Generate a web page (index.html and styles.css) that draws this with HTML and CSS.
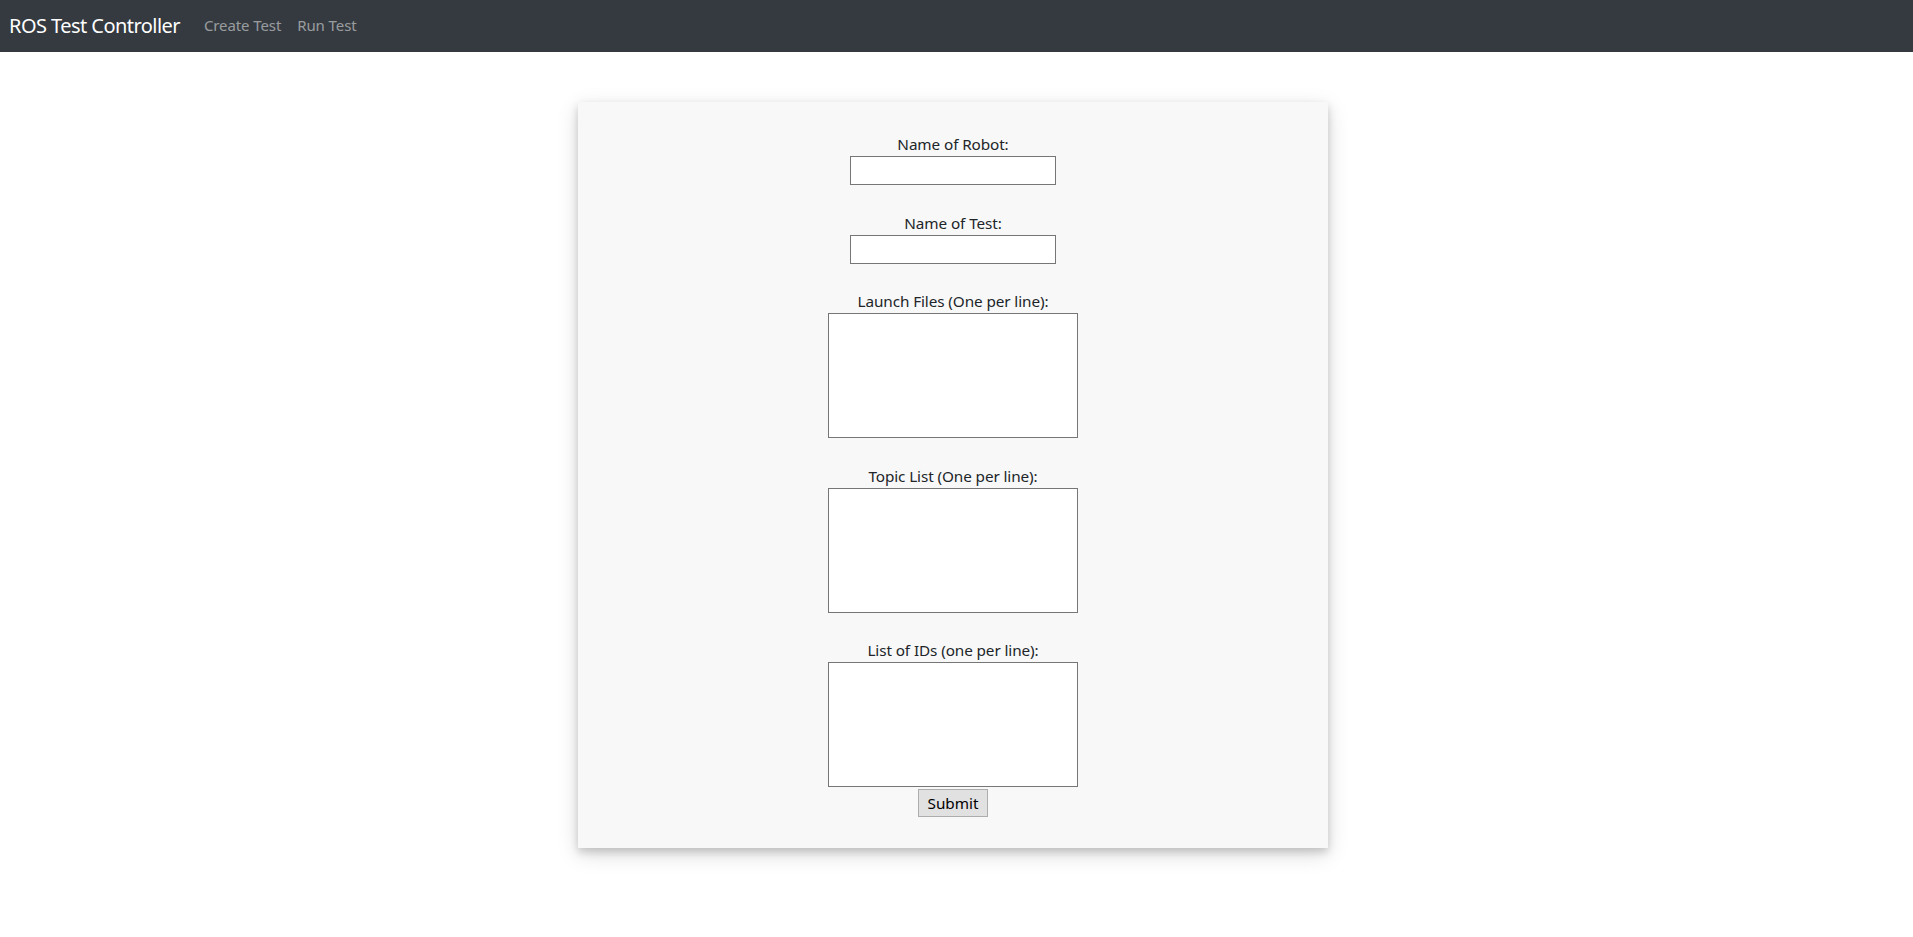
FILE: index.html
```html
<!DOCTYPE html>
<html lang="en">
<head>
<meta charset="utf-8">
<title>ROS Test Controller</title>
<link rel="stylesheet" href="styles.css">
</head>
<body>
<nav class="navbar">
  <a class="brand" href="#">ROS Test Controller</a>
  <a class="nav-link" href="#">Create Test</a>
  <a class="nav-link" href="#">Run Test</a>
</nav>
<main class="page">
  <form class="card">
    <div class="field">
      <label class="label" for="robot">Name of Robot:</label>
      <input class="text-input" id="robot" type="text">
    </div>
    <div class="field">
      <label class="label" for="test">Name of Test:</label>
      <input class="text-input" id="test" type="text">
    </div>
    <div class="field">
      <label class="label" for="launch">Launch Files (One per line):</label>
      <textarea class="area" id="launch"></textarea>
    </div>
    <div class="field">
      <label class="label" for="topics">Topic List (One per line):</label>
      <textarea class="area" id="topics"></textarea>
    </div>
    <div class="field last">
      <label class="label" for="ids">List of IDs (one per line):</label>
      <textarea class="area" id="ids"></textarea>
    </div>
    <button class="submit" type="button">Submit</button>
  </form>
</main>
</body>
</html>
```

FILE: styles.css
```css
* { box-sizing: border-box; }

body {
  margin: 0;
  font-family: "Noto Sans", "Open Sans", "Liberation Sans", sans-serif;
  font-size: 16px;
  color: #212529;
  background: #ffffff;
}

.navbar {
  height: 52px;
  background: #343a40;
  display: flex;
  align-items: center;
  padding: 0 9px 2px;
}

.brand {
  color: #ffffff;
  font-size: 20px;
  text-decoration: none;
  margin-right: 16px;
  letter-spacing: -0.55px;
}

.nav-link {
  color: rgba(255, 255, 255, 0.5);
  font-size: 15px;
  text-decoration: none;
  padding: 0 8px;
  letter-spacing: -0.1px;
}

.page {
  display: flex;
  justify-content: center;
  padding: 50px 7px 40px 0;
}

.card {
  width: 750px;
  background: #f8f8f8;
  box-shadow: 0 4px 8px 0 rgba(0, 0, 0, 0.16), 0 6px 20px 0 rgba(0, 0, 0, 0.15);
  padding: 31px 0 31px;
  display: flex;
  flex-direction: column;
  align-items: center;
}

.field {
  display: flex;
  flex-direction: column;
  align-items: center;
  margin-bottom: 26.5px;
}

.field.last {
  margin-bottom: 2px;
}

.label {
  line-height: 23px;
  font-size: 15.3px;
  letter-spacing: -0.1px;
}

.text-input {
  width: 206px;
  height: 29px;
  border: 1px solid #767676;
  background: #ffffff;
  margin: 0;
}

.area {
  width: 250px;
  height: 125px;
  border: 1px solid #767676;
  background: #ffffff;
  margin: 0;
  resize: none;
}

.submit {
  width: 70px;
  height: 28px;
  background: #e1e1e1;
  border: 1px solid #adadad;
  font-family: inherit;
  font-size: 15.3px;
  color: #000000;
  padding: 0;
}
```
